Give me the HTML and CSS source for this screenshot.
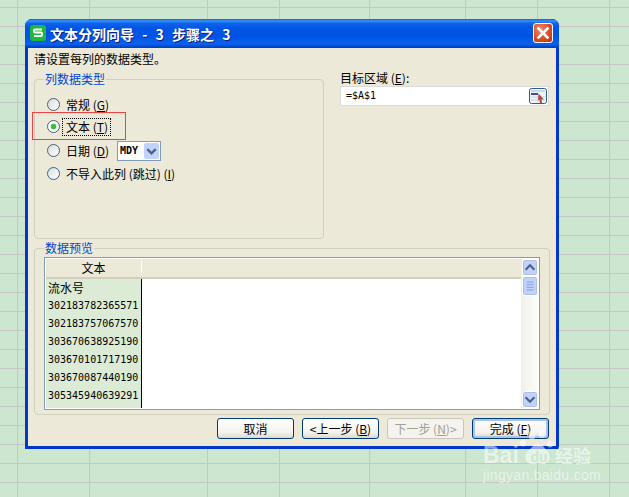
FILE: index.html
```html
<!DOCTYPE html>
<html lang="zh">
<head>
<meta charset="utf-8">
<title>文本分列向导</title>
<link rel="stylesheet" href="styles.css">
</head>
<body>
<div class="window">
  <div class="titlebar">
    <svg class="app-icon" viewBox="0 0 16 16"><rect width="16" height="16" rx="3" fill="#1fb83c"/><path d="M12 4.500H5a1 1 0 0 0-1 1v1a1 1 0 0 0 1 1h6a1 1 0 0 1 1 1v1.500a1 1 0 0 1-1 1H4" fill="none" stroke="#fff" stroke-width="2"/></svg>
    <span class="title">文本分列向导 - 3 步骤之 3</span>
    <button class="close"><svg viewBox="0 0 18 18"><path d="M4.500 4.500l9 9M13.500 4.500l-9 9" stroke="#fff" stroke-width="2.600" stroke-linecap="square"/></svg></button>
  </div>
  <div class="client">
    <p class="intro">请设置每列的数据类型。</p>
    <div class="upper">
      <fieldset class="group types">
        <legend>列数据类型</legend>
        <div class="radio-row"><span class="radio"></span><label>常规 (<u>G</u>)</label></div>
        <div class="radio-row focused"><span class="radio checked"></span><label>文本 (<u>T</u>)</label></div>
        <div class="radio-row"><span class="radio"></span><label>日期 (<u>D</u>)</label>
          <div class="select"><span class="select-value">MDY</span><span class="select-btn"><svg viewBox="0 0 16 16"><path d="M3.500 6l4.500 4.500L12.500 6" fill="none" stroke="#4d6185" stroke-width="2.400"/></svg></span></div>
        </div>
        <div class="radio-row"><span class="radio"></span><label>不导入此列 (跳过) (<u>I</u>)</label></div>
        <div class="annotation"></div>
      </fieldset>
      <div class="target">
        <div class="target-label">目标区域 (<u>E</u>):</div>
        <div class="range-input">
          <span>=$A$1</span>
          <svg class="range-icon" viewBox="0 0 18 16"><rect x=".5" y=".5" width="17" height="15" rx="2" fill="#eef3fb" stroke="#2f5f8f"/><rect x="2" y="2" width="14" height="2" fill="#c9d6ee"/><rect x="2" y="5" width="7" height="2" fill="#4b4a8c"/><path d="M2 9h14M2 12h14M9 8v6" stroke="#c6d4ea"/><path d="M9.500 5.500l5.500 6-2.500-.3L13 15l-2 .5-.6-4-1.400 1z" fill="#a8503c"/></svg>
        </div>
      </div>
    </div>
    <fieldset class="group preview">
      <legend>数据预览</legend>
      <div class="list">
        <div class="table">
          <div class="thead"><span class="th-first">文本</span><span class="th-rest"></span></div>
          <div class="tbody">
            <div class="col-first">
              <div class="cell cell-head">流水号</div>
              <div class="cell">302183782365571</div>
              <div class="cell">302183757067570</div>
              <div class="cell">303670638925190</div>
              <div class="cell">303670101717190</div>
              <div class="cell">303670087440190</div>
              <div class="cell">305345940639291</div>
            </div>
            <div class="col-rest"></div>
          </div>
        </div>
        <div class="scrollbar">
          <span class="sb-btn"><svg viewBox="0 0 16 16"><path d="M3 10.500l5-5 5 5" fill="none" stroke="#4d6185" stroke-width="2.400"/></svg></span>
          <span class="sb-thumb"><svg viewBox="0 0 16 20"><path d="M4 5.500h8M4 8.500h8M4 11.500h8M4 14.500h8" stroke="#7f99d8"/></svg></span>
          <span class="sb-track"></span>
          <span class="sb-btn"><svg viewBox="0 0 16 16"><path d="M3 5.500l5 5 5-5" fill="none" stroke="#4d6185" stroke-width="2.400"/></svg></span>
        </div>
      </div>
    </fieldset>
    <div class="actions">
      <button class="btn">取消</button>
      <button class="btn">&lt;上一步 (<u>B</u>)</button>
      <button class="btn disabled">下一步 (<u>N</u>)&gt;</button>
      <button class="btn default">完成 (<u>F</u>)</button>
    </div>
  </div>
</div>
<div class="watermark">
  <svg class="paw" viewBox="0 0 36 38"><ellipse cx="12" cy="5" rx="3.500" ry="4.500"/><ellipse cx="22" cy="4" rx="3.500" ry="4"/><ellipse cx="30" cy="14" rx="3" ry="3.500"/><ellipse cx="3" cy="13" rx="3" ry="3.500"/><path d="M18 14c5 0 6 4 10 8 4 5 1 13-6 12-2 0-3-1-4-1s-3 2-6 1c-6 0-9-7-5-12 4-3 6-8 11-8z"/></svg>
  <div class="wm-main"><span class="wm-bai">Bai</span><span class="wm-du">du</span><span class="wm-cn">经验</span></div>
  <div class="wm-url">jingyan.baidu.com</div>
</div>
</body>
</html>
```
FILE: styles.css
```css
* { box-sizing: border-box; }
html, body { margin: 0; height: 100%; }
body {
  width: 629px;
  height: 497px;
  overflow: hidden;
  position: relative;
  font: 12px/16px "Noto Sans CJK SC", sans-serif;
  color: #000;
  background-color: #cde6d0;
  background-image:
    linear-gradient(#c6c6c6, #c6c6c6), linear-gradient(#c6c6c6, #c6c6c6),
    linear-gradient(#c6c6c6, #c6c6c6), linear-gradient(#c6c6c6, #c6c6c6),
    linear-gradient(#c6c6c6, #c6c6c6), linear-gradient(#c6c6c6, #c6c6c6),
    linear-gradient(#c6c6c6, #c6c6c6), linear-gradient(#c6c6c6, #c6c6c6),
    repeating-linear-gradient(to bottom, transparent 0 7px, #c6c6c6 7px 8px, transparent 8px 19px);
  background-size: 1px 100%, 1px 100%, 1px 100%, 1px 100%, 1px 100%, 1px 100%, 1px 100%, 1px 100%, 100% 100%;
  background-position: 17px 0, 89px 0, 207px 0, 279px 0, 369px 0, 465px 0, 537px 0, 609px 0, 0 0;
  background-repeat: no-repeat;
}
u { text-decoration: underline; }
p { margin: 0; }

.window {
  position: absolute;
  left: 25px;
  top: 19px;
  width: 534px;
  height: 430px;
  display: flex;
  flex-direction: column;
  background: #0831d9;
  border-radius: 7px 7px 0 0;
  border: solid #0038c8;
  border-width: 0 3px 3px;
}
.titlebar {
  height: 29px;
  margin: 0 -3px;
  padding: 0 6px 0 5px;
  display: flex;
  align-items: center;
  border-radius: 7px 7px 0 0;
  background: linear-gradient(to bottom, #0a5ee0 0, #3d93f8 2px, #0f66ea 4px, #0055e5 9px, #0054e3 18px, #0a62ee 25px, #0044c8 28px, #003cb8 29px);
}
.app-icon { width: 16px; height: 16px; flex: none; margin-top: -1px; }
.title {
  margin-left: 4px;
  flex: 1;
  color: #fff;
  font-weight: 700;
  font-size: 14px;
  word-spacing: 5px;
  white-space: nowrap;
  text-shadow: 1px 1px 0 #0f1f80;
}
.close {
  width: 20px;
  height: 20px;
  padding: 0;
  margin-top: -1px;
  border: 1px solid #fff;
  border-radius: 3px;
  background: radial-gradient(circle at 35% 30%, #ec8a66, #d8481f 60%, #c23410);
  display: flex;
}
.close svg { width: 18px; height: 18px; }

.client {
  flex: 1;
  background: #ece9d8;
  padding: 3px 6px 0;
  display: flex;
  flex-direction: column;
  min-height: 0;
}
.intro { height: 20px; }
.upper {
  display: grid;
  grid-template-columns: 290px 1fr;
  column-gap: 16px;
  padding-right: 1px;
}
.group {
  margin: 0;
  padding: 0;
  min-width: 0;
  border: 1px solid #d0d0bf;
  border-radius: 4px;
  position: relative;
}
.group legend {
  padding: 0 1px;
  color: #0046d5;
  line-height: 16px;
}
.types {
  height: 168px;
  padding: 6px 0 0 12px;
}
.types legend { margin-left: -3px; }
.radio-row {
  height: 23px;
  display: flex;
  align-items: center;
  white-space: nowrap;
}
.radio-row label { margin-left: 6px; }
.radio-row.focused { margin: -1px 0 1px; }
.radio-row.focused label {
  outline: 1px dotted #000;
  margin-left: 3px;
  padding: 0 2px 0 3px;
}
.radio {
  width: 13px;
  height: 13px;
  flex: none;
  border-radius: 50%;
  border: 1px solid #3f6286;
  background: linear-gradient(135deg, #dcdcd5, #fff);
}
.radio.checked { background: radial-gradient(circle, #3cc03c 0 2.500px, #fff 3.200px); }
.select {
  margin-left: 8px;
  width: 44px;
  height: 20px;
  display: flex;
  align-items: center;
  justify-content: space-between;
  background: #fff;
  border: 1px solid #7f9db9;
  padding: 0 1px;
}
.select-value { font: 700 10px/16px "DejaVu Sans Mono", monospace; margin-left: 1px; }
.select-btn {
  width: 15px;
  height: 16px;
  background: #c1d3fb;
  border-radius: 2px;
  display: flex;
}
.annotation {
  position: absolute;
  left: -3px;
  top: 25px;
  width: 94px;
  height: 28px;
  border: 1px solid #f04040;
}
.target-label { height: 16px; margin-top: -1px; white-space: nowrap; }
.range-input {
  height: 20px;
  display: flex;
  align-items: center;
  justify-content: space-between;
  padding: 0 1px 0 5px;
  background: #fff;
  border: 1px solid #dcdcdc;
  font: 10px/16px "DejaVu Sans Mono", monospace;
}
.range-icon { width: 18px; height: 16px; }

.preview {
  height: 175px;
  margin-top: 1px;
  padding: 1px 9px 0;
}
.list {
  height: 153px;
  display: flex;
  border: 1px solid #7f9db9;
  background: #fff;
  padding: 1px;
}
.table { flex: 1; display: flex; flex-direction: column; min-width: 0; }
.thead {
  height: 20px;
  flex: none;
  display: flex;
  background: #ece9d8;
  border-bottom: 2px solid #d3cfbe;
}
.th-first {
  width: 95px;
  text-align: center;
  line-height: 18px;
}
.th-rest {
  flex: 1;
  border-left: 1px solid #fff;
  margin: 2px 0;
}
.tbody { flex: 1; display: flex; min-height: 0; }
.col-first {
  width: 96px;
  background: #dcebd5;
  border-right: 1px solid #000;
  overflow: hidden;
}
.cell {
  height: 18px;
  padding-left: 2px;
  font: 10px/18px "DejaVu Sans Mono", monospace;
  white-space: nowrap;
}
.cell-head { font: 12px/18px "Noto Sans CJK SC", sans-serif; }
.col-rest { flex: 1; background: #fff; }
.scrollbar {
  width: 17px;
  flex: none;
  display: flex;
  flex-direction: column;
  background: linear-gradient(to right, #f1efe7, #fdfdfb);
}
.sb-btn, .sb-thumb {
  flex: none;
  width: 16px;
  margin-left: 1px;
  background: #c1d3fb;
  border: 1px solid #fff;
  border-radius: 3px;
  display: flex;
  box-shadow: 0 0 0 1px #aebfe6 inset;
}
.sb-btn { height: 17px; }
.sb-thumb { height: 20px; }
.sb-track { flex: 1; }

.actions {
  display: flex;
  justify-content: flex-end;
  gap: 8px;
  margin-top: 3px;
  padding-right: 1px;
}
.btn {
  width: 77px;
  height: 21px;
  padding: 0;
  border: 1px solid #003c74;
  border-radius: 3px;
  background: linear-gradient(to bottom, #fff, #f4f3ee 70%, #dcd8cc);
  font: inherit;
  color: #000;
  white-space: nowrap;
}
.btn.disabled {
  color: #a1a192;
  border-color: #c9c7ba;
  background: #f4f3ee;
}
.btn.default {
  box-shadow: inset 0 0 0 2px #a9c2ee;
}

.watermark {
  position: absolute;
  left: 483px;
  top: 430px;
  width: 112px;
  height: 52px;
  color: rgba(255, 255, 255, .55);
  pointer-events: none;
}
.paw {
  position: absolute;
  left: 37px;
  top: 0;
  width: 36px;
  height: 38px;
  fill: rgba(255, 255, 255, .55);
}
.wm-main {
  position: absolute;
  left: 0;
  top: 14px;
  display: flex;
  align-items: center;
  height: 22px;
  white-space: nowrap;
}
.wm-bai { font: 700 23px/22px "Liberation Sans", sans-serif; width: 40px; }
.wm-du { font: 700 14px/18px "Liberation Sans", sans-serif; width: 32px; text-align: center; margin-top: 4px; color: #cde6d0; }
.wm-cn { font: 700 18px/22px "Noto Sans CJK SC", sans-serif; }
.wm-url {
  position: absolute;
  left: 0;
  top: 37px;
  font: 14px/16px "Liberation Sans", sans-serif;
  letter-spacing: .3px;
  white-space: nowrap;
}
```
